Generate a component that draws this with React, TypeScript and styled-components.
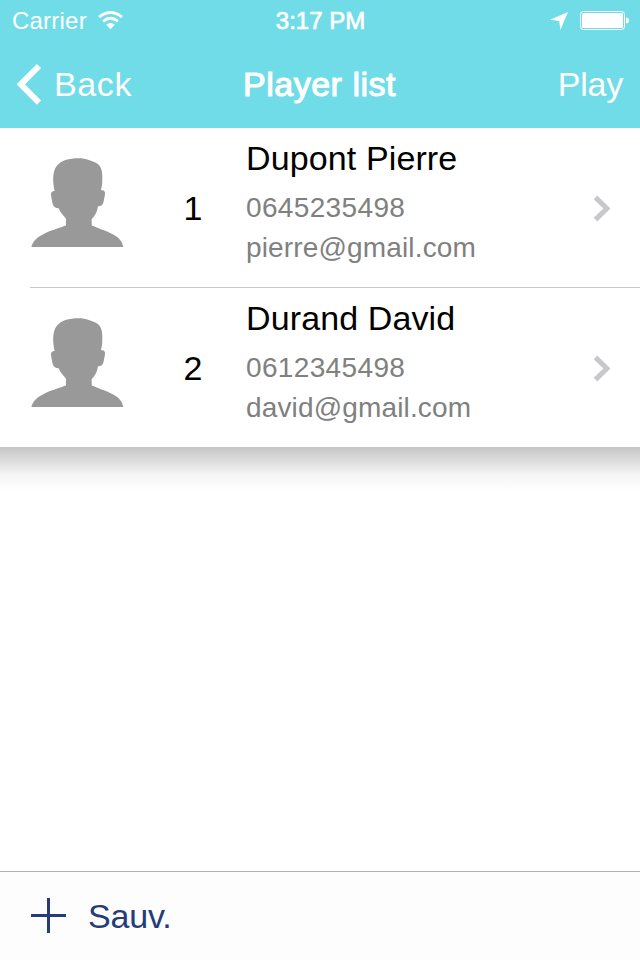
import React from "react";
import styled, { createGlobalStyle } from "styled-components";

const GlobalStyle = createGlobalStyle`
  * { box-sizing: border-box; }
  body { margin: 0; background: #fff; }
`;

const Screen = styled.div`
  width: 640px;
  height: 960px;
  display: flex;
  flex-direction: column;
  overflow: hidden;
  background: #fff;
  color: #000;
  font-family: "Liberation Sans", Arial, sans-serif;
  white-space: nowrap;
`;

const Header = styled.header`
  height: 128px;
  background: #6fdce7;
  color: #fff;
`;

const StatusBar = styled.div`
  height: 40px;
  padding: 0 11px 0 12px;
  display: grid;
  grid-template-columns: 1fr auto 1fr;
  align-items: center;
  font-size: 24px;
  line-height: 40px;
`;

const Cluster = styled.div<{ $end?: boolean; $gap: number }>`
  display: flex;
  align-items: center;
  justify-content: ${(p) => (p.$end ? "flex-end" : "flex-start")};
  gap: ${(p) => p.$gap}px;
`;

const Carrier = styled.span`
  padding-top: 2px;
  line-height: 38px;
  letter-spacing: 0.22px;
`;

const Clock = styled.span`
  padding-top: 2px;
  line-height: 38px;
  letter-spacing: 0;
  -webkit-text-stroke: 0.7px #fff;
`;

const NavBar = styled.nav`
  height: 88px;
  padding: 0 17px 0 16px;
  display: grid;
  grid-template-columns: 1fr auto 1fr;
  align-items: center;
  font-size: 34px;
  line-height: 88px;
`;

const BackLabel = styled.span`
  letter-spacing: 0.6px;
`;

const PlayLabel = styled.span`
  letter-spacing: -0.2px;
`;

const Title = styled.h1`
  margin: 0;
  font-size: 34px;
  font-weight: 400;
  letter-spacing: 0.5px;
  -webkit-text-stroke: 1.1px #fff;
`;

const List = styled.ul`
  margin: 0;
  padding: 0;
  height: 319px;
  list-style: none;
`;

const Row = styled.li<{ $last?: boolean }>`
  height: 160px;
  margin-left: 30px;
  padding-right: 29px;
  display: grid;
  grid-template-columns: 95px 77px 1fr 18px;
  column-gap: 22px;
  align-items: center;
  border-bottom: ${(p) => (p.$last ? "0" : "1px solid #c8c7cc")};
`;

const Position = styled.span`
  font-size: 34px;
  text-align: center;
  padding-left: 15px;
  line-height: 40px;
`;

const Details = styled.div`
  align-self: start;
  padding-top: 8px;
  color: #808080;
  font-size: 28px;
`;

const Name = styled.div`
  height: 52px;
  font-size: 34px;
  line-height: 44px;
  letter-spacing: 0.12px;
  color: #000;
`;

const Line = styled.div<{ $spacing: number }>`
  height: 40px;
  line-height: 40px;
  letter-spacing: ${(p) => p.$spacing}px;
`;

const Shade = styled.div`
  height: 44px;
  background: linear-gradient(#c5c5c5, #dadada 28%, #f4f4f4 62%, #fff);
`;

const Toolbar = styled.footer`
  height: 89px;
  margin-top: auto;
  padding: 0 0 1px 31px;
  display: flex;
  align-items: center;
  gap: 22px;
  border-top: 1px solid #b2b2b2;
  background: #fdfdfd;
  color: #243c78;
  font-size: 34px;
`;

const SaveLabel = styled.span`
  padding-top: 2px;
  letter-spacing: -0.15px;
`;

const WifiIcon = () => (
  <svg width="26" height="20" viewBox="0 0 26 20" fill="none" stroke="#fff" strokeWidth="2.9">
    <path d="M1.1 7.1Q12.5-1.9 23.9 7.1" />
    <path d="M5.1 11.3Q12.5 5.4 19.9 11.3" />
    <path d="M8.2 14.8Q12.5 11.2 16.8 14.8L12.5 19.2Z" fill="#fff" stroke="none" />
  </svg>
);

const LocationIcon = () => (
  <svg width="18" height="20" viewBox="0 0 18 20" fill="#fff">
    <path d="M18 2L10.4 20L9.2 11L0 9.8Z" />
  </svg>
);

const BatteryIcon = () => (
  <svg width="49" height="20" viewBox="0 0 49 20">
    <rect x=".5" y="1.5" width="44" height="18" rx="3" fill="none" stroke="#fff" />
    <rect x="2" y="3" width="41" height="15" rx="1.5" fill="#fff" />
    <path d="M46 7.5Q49 8 49 10.5T46 13.5Z" fill="#fff" />
  </svg>
);

const BackIcon = () => (
  <svg width="26" height="42" viewBox="0 0 26 42" fill="none" stroke="#fff" strokeWidth="6">
    <path d="M23 3L4.8 21.3L23 39.6" />
  </svg>
);

const ChevronIcon = () => (
  <svg width="18" height="28" viewBox="0 0 18 28" fill="none" stroke="#c7c7cc" strokeWidth="5">
    <path d="M2.5 3.4L13.9 14.5L2.5 25.6" />
  </svg>
);

const PlusIcon = () => (
  <svg width="35" height="35" viewBox="0 0 35 35" fill="#243c78">
    <path d="M16 0h3v16h16v3H19v16h-3V19H0v-3h16z" />
  </svg>
);

const AvatarImage = styled.svg`
  align-self: start;
  margin-top: 29px;
`;

const Avatar = () => (
  <AvatarImage width="95" height="90" viewBox="30 36 285 270" fill="#999">
    <path d="M34 306C38 290 48 279 67 269C88 257 121 249 138 241V221C129 211 120 201 116 190C105 189 99 184 97 173L93 151C92 142 96 138 104 138C98 113 97 83 108 66C120 46 149 40 176 40C199 40 216 48 230 55C244 62 247 80 247 99C247 112 246 124 243 136C252 134 256 139 255 148L251 169C249 180 243 184 234 184C232 199 226 211 215 223V241C230 249 258 257 281 269C299 279 307 290 310 306Z" />
  </AvatarImage>
);

const players = [
  { name: "Dupont Pierre", phone: "0645235498", email: "pierre@gmail.com" },
  { name: "Durand David", phone: "0612345498", email: "david@gmail.com" },
];

export default function App() {
  return (
    <Screen>
      <GlobalStyle />
      <Header>
        <StatusBar>
          <Cluster $gap={11}>
            <Carrier>Carrier</Carrier>
            <WifiIcon />
          </Cluster>
          <Clock>3:17 PM</Clock>
          <Cluster $end $gap={12}>
            <LocationIcon />
            <BatteryIcon />
          </Cluster>
        </StatusBar>
        <NavBar>
          <Cluster $gap={12}>
            <BackIcon />
            <BackLabel>Back</BackLabel>
          </Cluster>
          <Title>Player list</Title>
          <Cluster $end $gap={0}>
            <PlayLabel>Play</PlayLabel>
          </Cluster>
        </NavBar>
      </Header>
      <List>
        {players.map((player, index) => (
          <Row key={player.email} $last={index === players.length - 1}>
            <Avatar />
            <Position>{index + 1}</Position>
            <Details>
              <Name>{player.name}</Name>
              <Line $spacing={0.35}>{player.phone}</Line>
              <Line $spacing={0.15}>{player.email}</Line>
            </Details>
            <ChevronIcon />
          </Row>
        ))}
      </List>
      <Shade />
      <Toolbar>
        <PlusIcon />
        <SaveLabel>Sauv.</SaveLabel>
      </Toolbar>
    </Screen>
  );
}
